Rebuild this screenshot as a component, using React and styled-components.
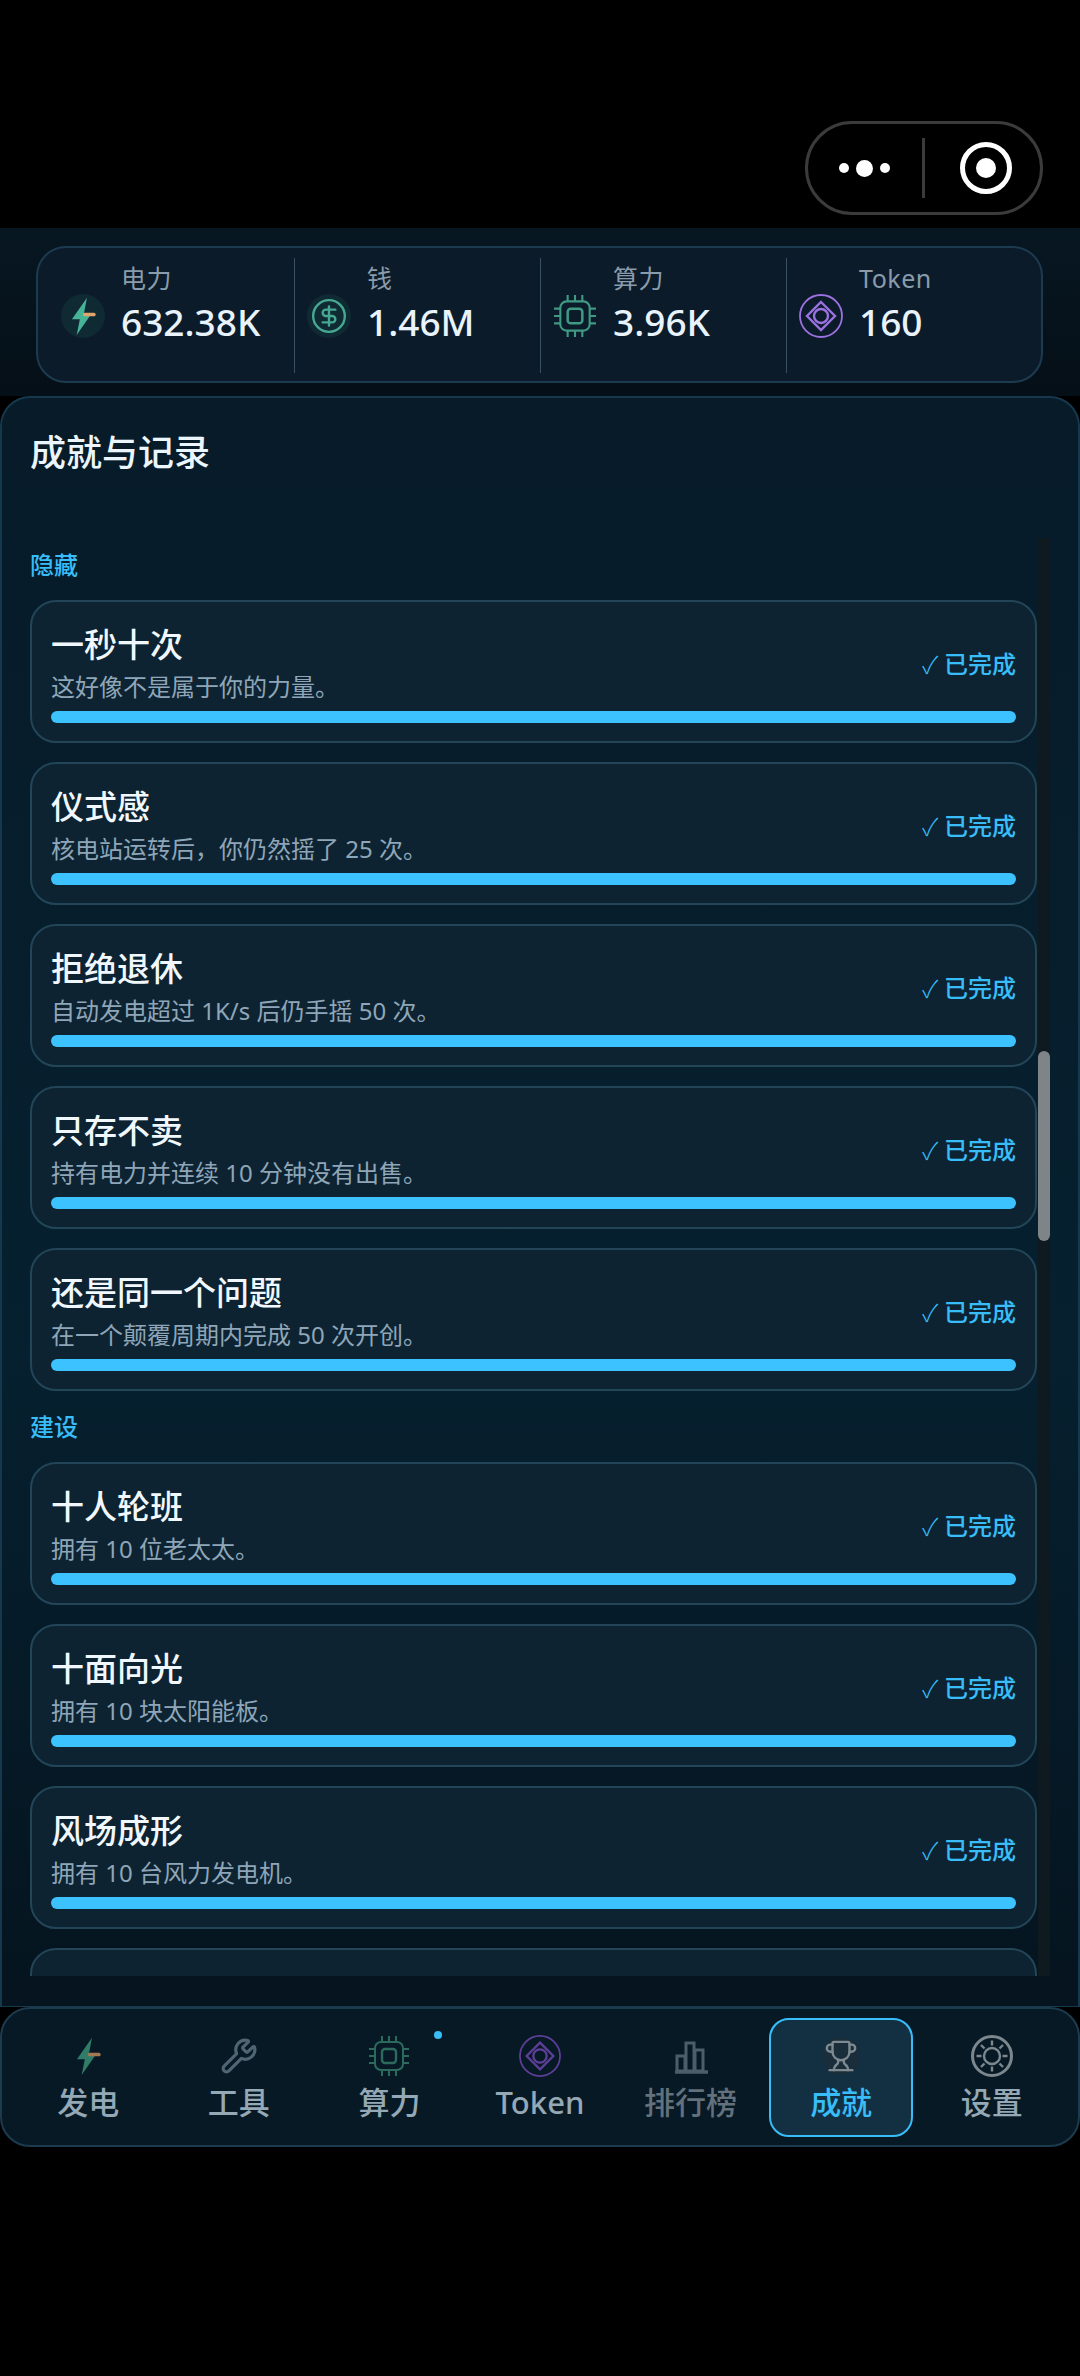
import React from 'react';
import styled, {createGlobalStyle} from 'styled-components';
import {CircleDollarSign, Wrench, Trophy} from 'lucide-react';

const GlobalStyle = createGlobalStyle`
	* { box-sizing: border-box; }
	html, body { margin: 0; padding: 0; background: #000; }
	body { font-family: "Noto Sans", "Noto Sans CJK SC", sans-serif; }
`;

const Pantalla = styled.div`
	width: 1080px;
	height: 2376px;
	background: #000;
	overflow: hidden;
`;

const BarraSuperior = styled.div`
	height: 228px;
	padding: 121px 37px 0 0;
	display: flex;
	justify-content: flex-end;
`;

const Capsula = styled.div`
	width: 238px;
	height: 94px;
	border: 3px solid #3b3b3b;
	border-radius: 47px;
	display: flex;
	align-items: center;
`;

const Puntos = styled.div`
	width: 114px;
	padding-left: 31px;
	display: flex;
	align-items: center;
	gap: 7px;
`;

const Punto = styled.span`
	width: ${(p) => (p.$big ? '17px' : '10px')};
	height: ${(p) => (p.$big ? '17px' : '10px')};
	border-radius: 50%;
	background: #fff;
`;

const Separador = styled.div`
	width: 3px;
	height: 60px;
	background: #3b3b3b;
`;

const Grabar = styled.div`
	width: 52px;
	height: 52px;
	margin-left: 35px;
	border: 5px solid #fff;
	border-radius: 50%;
	display: flex;
	align-items: center;
	justify-content: center;
`;

const GrabarCentro = styled.div`
	width: 20px;
	height: 20px;
	border-radius: 50%;
	background: #fff;
`;

const ZonaStats = styled.div`
	padding: 18px 37px 13px 36px;
	background: linear-gradient(180deg, #071722, #050f17);
`;

const TarjetaStats = styled.div`
	height: 137px;
	padding: 10px 11px;
	display: grid;
	grid-template-columns: repeat(4, 246px);
	background: #0c1b2a;
	border: 2px solid #1d3b50;
	border-radius: 30px;
`;

const Stat = styled.div`
	height: 115px;
	padding: 4px 0 0 12px;
	display: flex;
	gap: 16px;
	border-right: 1px solid #3a4f5f;

	&:last-child {
		border-right: none;
	}
`;

const StatIcono = styled.div`
	width: 44px;
	height: 44px;
	margin-top: 32px;
	display: flex;
	align-items: center;
	justify-content: center;
	flex-shrink: 0;
`;

const IconDisc = styled.div`
	width: 44px;
	height: 44px;
	border-radius: 50%;
	background: #0f2a33;
	display: flex;
	align-items: center;
	justify-content: center;
`;

const StatTexto = styled.div`
	display: flex;
	flex-direction: column;
	gap: 3px;
`;

const StatLabel = styled.div`
	font-size: 25px;
	line-height: 32px;
	letter-spacing: 0.5px;
	color: #8a9bab;
`;

const StatValor = styled.div`
	font-size: 37px;
	line-height: 50px;
	font-weight: 500;
	color: #e8f3fb;
`;

const Panel = styled.div`
	position: relative;
	height: 1611px;
	padding: 31px 0 30px;
	background: linear-gradient(180deg, #071b29, #06202f 60%, #05141f);
	border: 2px solid #16384c;
	border-bottom-width: 1px;
	border-radius: 30px 30px 0 0;
	display: flex;
	flex-direction: column;
`;

const PanelTitulo = styled.h2`
	margin: 0 0 61px 28px;
	font-size: 36px;
	line-height: 48px;
	font-weight: 500;
	color: #eaf5fc;
`;

const Lista = styled.div`
	position: relative;
	flex: 1;
	overflow: hidden;
	padding: 10px 41px 0 28px;
	display: flex;
	flex-direction: column;
	gap: 19px;
`;

const Grupo = styled.div`
	height: 33px;
	font-size: 24px;
	line-height: 33px;
	font-weight: 500;
	color: #38bdf8;
	flex-shrink: 0;
`;

const Logro = styled.div`
	height: 143px;
	flex-shrink: 0;
	padding: 21px 19px 18px;
	background: #0d2332;
	border: 2px solid #234558;
	border-radius: 26px;
`;

const LogroFila = styled.div`
	display: flex;
	justify-content: space-between;
	align-items: center;
`;

const LogroTitulo = styled.div`
	font-size: 33px;
	line-height: 44px;
	font-weight: 500;
	color: #f1f8fd;
`;

const LogroDesc = styled.div`
	margin-top: 3px;
	font-size: 24px;
	line-height: 34px;
	color: #8fa6b8;
`;

const Estado = styled.div`
	font-size: 24px;
	line-height: 34px;
	font-weight: 500;
	color: #38bdf8;
	display: flex;
	align-items: center;
	gap: 6px;
`;

const Check = styled.span`
	font-family: "Noto Sans CJK SC", sans-serif;
	font-weight: 300;
	font-size: 24px;
`;

const Barra = styled.div`
	height: 12px;
	margin-top: 7px;
	border-radius: 6px;
	background: #3cc3ff;
`;

const Pista = styled.div`
	position: absolute;
	top: 0;
	right: 28px;
	bottom: 0;
	width: 12px;
	background: #0e1a20;
`;

const Pulgar = styled.div`
	width: 12px;
	height: 190px;
	margin-top: 513px;
	border-radius: 6px;
	background: #7f8488;
`;

const Nav = styled.nav`
	height: 140px;
	padding: 9px 14px;
	display: grid;
	grid-template-columns: repeat(7, 1fr);
	gap: 6px;
	background: #081926;
	border: 2px solid #1c3b4e;
	border-radius: 30px;
`;

const Tab = styled.div`
	position: relative;
	height: 119px;
	padding-top: 15px;
	display: flex;
	flex-direction: column;
	align-items: center;
	gap: 5px;
	border: 2px solid ${(p) => (p.$active ? '#38bdf8' : 'transparent')};
	border-radius: 20px;
	background: ${(p) => (p.$active ? '#123042' : 'transparent')};
`;

const TabIcono = styled.div`
	width: 42px;
	height: 42px;
	display: flex;
	align-items: center;
	justify-content: center;
`;

const TrophyDisc = styled.div`
	width: 38px;
	height: 38px;
	border-radius: 50%;
	background: #192d3a;
	display: flex;
	align-items: center;
	justify-content: center;
`;

const TabLabel = styled.div`
	font-size: 31px;
	line-height: 40px;
	font-weight: 500;
	color: ${(p) => (p.$active ? '#38bdf8' : p.$dim ? '#62717b' : '#94a8b5')};
`;

const Aviso = styled.span`
	position: absolute;
	top: 11px;
	right: 18px;
	width: 8px;
	height: 8px;
	border-radius: 50%;
	background: #38bdf8;
`;

const BoltIcon = ({size = 38, bolt = '#46b296', tip = '#e0a36c'}) => (
	<svg width={size} height={size} viewBox="0 0 24 24">
		<path d="M14.500 0.500 L5 14 H10 L8 24 L17 11 H12.500 Z" fill={bolt} />
		<rect x="12" y="10" width="8" height="2.200" rx="1" fill={tip} />
	</svg>
);

const ChipIcon = ({size = 44, color = '#3f9a84'}) => (
	<svg width={size} height={size} viewBox="0 0 42 42" fill="none" stroke={color} strokeWidth="2">
		<rect x="7" y="7" width="28" height="28" rx="6" />
		<rect x="14" y="14" width="14" height="14" rx="3" strokeWidth="2.400" />
		<path d="M14 1v6M21 1v6M28 1v6M14 35v6M21 35v6M28 35v6M1 14h6M1 21h6M1 28h6M35 14h6M35 21h6M35 28h6" />
	</svg>
);

const TokenIcon = ({size = 44, color = '#9b72e0'}) => (
	<svg width={size} height={size} viewBox="0 0 44 44" fill="none" stroke={color}>
		<circle cx="22" cy="22" r="21" strokeWidth="1.800" />
		<path d="M22 8 L36 22 L22 36 L8 22 Z" strokeWidth="2.400" />
		<circle cx="22" cy="22" r="7" strokeWidth="2.400" />
	</svg>
);

const ChartIcon = ({size = 42, color = '#4b5e69'}) => (
	<svg width={size} height={size} viewBox="0 0 42 42" fill="none" stroke={color} strokeWidth="3">
		<path d="M5 37h33" strokeWidth="3.400" />
		<rect x="7" y="21" width="8" height="15" />
		<rect x="16" y="8" width="8" height="28" />
		<rect x="25" y="15" width="8" height="21" />
	</svg>
);

const GearIcon = ({size = 42, color = '#7c888e'}) => (
	<svg width={size} height={size} viewBox="0 0 42 42" fill="none" stroke={color} strokeWidth="2.400">
		<circle cx="21" cy="21" r="19.500" strokeWidth="3" />
		<circle cx="21" cy="21" r="8" />
		<path d="M21 5.500v5M21 31.500v5M5.500 21h5M31.500 21h5M10 10l3.500 3.500M28.500 28.500L32 32M32 10l-3.500 3.500M13.500 28.500L10 32" />
	</svg>
);

const stats = [
	{label: '电力', value: '632.38K', icon: <IconDisc><BoltIcon /></IconDisc>},
	{label: '钱', value: '1.46M', icon: <IconDisc><CircleDollarSign size={38} color="#46a892" strokeWidth={1.500} /></IconDisc>},
	{label: '算力', value: '3.96K', icon: <ChipIcon />},
	{label: 'Token', value: '160', icon: <TokenIcon />},
];

const groups = [
	{
		name: '隐藏',
		items: [
			{title: '一秒十次', desc: '这好像不是属于你的力量。'},
			{title: '仪式感', desc: '核电站运转后，你仍然摇了 25 次。'},
			{title: '拒绝退休', desc: '自动发电超过 1K/s 后仍手摇 50 次。'},
			{title: '只存不卖', desc: '持有电力并连续 10 分钟没有出售。'},
			{title: '还是同一个问题', desc: '在一个颠覆周期内完成 50 次开创。'},
		],
	},
	{
		name: '建设',
		items: [
			{title: '十人轮班', desc: '拥有 10 位老太太。'},
			{title: '十面向光', desc: '拥有 10 块太阳能板。'},
			{title: '风场成形', desc: '拥有 10 台风力发电机。'},
		],
	},
];

const tabs = [
	{label: '发电', icon: <BoltIcon size={38} bolt="#2f7d68" tip="#a5794f" />},
	{label: '工具', icon: <Wrench size={38} color="#4f6672" strokeWidth={2} />},
	{label: '算力', icon: <ChipIcon size={42} color="#2c6a5e" />, dot: true},
	{label: 'Token', icon: <TokenIcon size={42} color="#5d3f98" />},
	{label: '排行榜', icon: <ChartIcon />, dim: true},
	{label: '成就', icon: <TrophyDisc><Trophy size={34} color="#7e8a90" strokeWidth={1.700} /></TrophyDisc>, active: true},
	{label: '设置', icon: <GearIcon />},
];

const App = () => {
	return (
		<Pantalla>
			<GlobalStyle />
			<BarraSuperior>
				<Capsula>
					<Puntos>
						<Punto />
						<Punto $big />
						<Punto />
					</Puntos>
					<Separador />
					<Grabar>
						<GrabarCentro />
					</Grabar>
				</Capsula>
			</BarraSuperior>

			<ZonaStats>
				<TarjetaStats>
					{stats.map((s) => (
						<Stat key={s.label}>
							<StatIcono>{s.icon}</StatIcono>
							<StatTexto>
								<StatLabel>{s.label}</StatLabel>
								<StatValor>{s.value}</StatValor>
							</StatTexto>
						</Stat>
					))}
				</TarjetaStats>
			</ZonaStats>

			<Panel>
				<PanelTitulo>成就与记录</PanelTitulo>
				<Lista>
					{groups.map((g) => (
						<React.Fragment key={g.name}>
							<Grupo>{g.name}</Grupo>
							{g.items.map((item) => (
								<Logro key={item.title}>
									<LogroFila>
										<div>
											<LogroTitulo>{item.title}</LogroTitulo>
											<LogroDesc>{item.desc}</LogroDesc>
										</div>
										<Estado><Check>✓</Check>已完成</Estado>
									</LogroFila>
									<Barra />
								</Logro>
							))}
						</React.Fragment>
					))}
					<Logro />
					<Pista><Pulgar /></Pista>
				</Lista>
			</Panel>

			<Nav>
				{tabs.map((t) => (
					<Tab key={t.label} $active={t.active}>
						{t.dot && <Aviso />}
						<TabIcono>{t.icon}</TabIcono>
						<TabLabel $active={t.active} $dim={t.dim}>{t.label}</TabLabel>
					</Tab>
				))}
			</Nav>
		</Pantalla>
	);
}

export default App;
